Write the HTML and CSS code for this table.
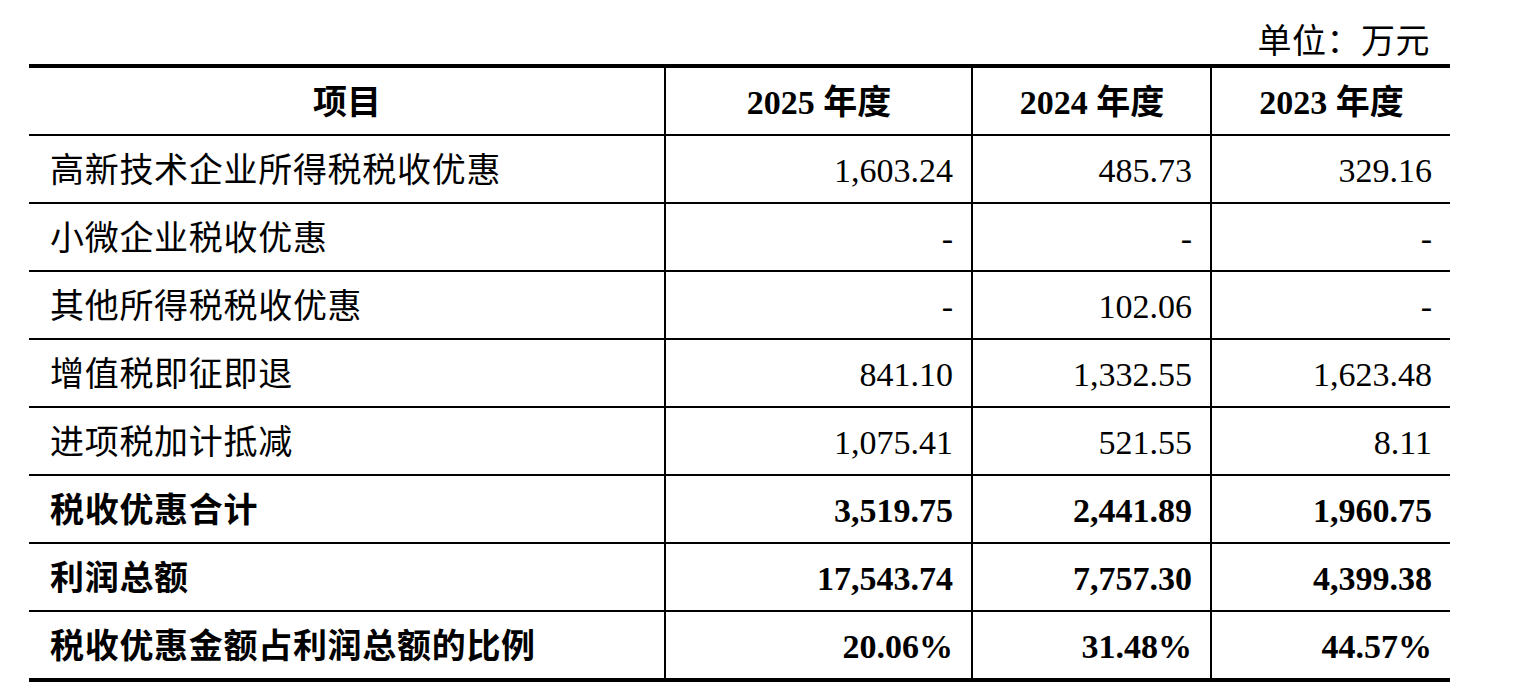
FILE: index.html
```html
<!DOCTYPE html>
<html lang="zh-CN">
<head>
<meta charset="utf-8">
<link rel="stylesheet" href="styles.css">
</head>
<body>
<div class="wrap">
  <div class="unit">单位：万元</div>
  <table class="tbl">
    <colgroup>
      <col class="c1"><col class="c2"><col class="c3"><col class="c4">
    </colgroup>
    <thead>
      <tr>
        <th>项目</th>
        <th>2025 年度</th>
        <th>2024 年度</th>
        <th>2023 年度</th>
      </tr>
    </thead>
    <tbody>
      <tr><td>高新技术企业所得税税收优惠</td><td class="n">1,603.24</td><td class="n">485.73</td><td class="n">329.16</td></tr>
      <tr><td>小微企业税收优惠</td><td class="n">-</td><td class="n">-</td><td class="n">-</td></tr>
      <tr><td>其他所得税税收优惠</td><td class="n">-</td><td class="n">102.06</td><td class="n">-</td></tr>
      <tr><td>增值税即征即退</td><td class="n">841.10</td><td class="n">1,332.55</td><td class="n">1,623.48</td></tr>
      <tr><td>进项税加计抵减</td><td class="n">1,075.41</td><td class="n">521.55</td><td class="n">8.11</td></tr>
      <tr class="b"><td>税收优惠合计</td><td class="n">3,519.75</td><td class="n">2,441.89</td><td class="n">1,960.75</td></tr>
      <tr class="b"><td>利润总额</td><td class="n">17,543.74</td><td class="n">7,757.30</td><td class="n">4,399.38</td></tr>
      <tr class="b"><td>税收优惠金额占利润总额的比例</td><td class="n">20.06%</td><td class="n">31.48%</td><td class="n">44.57%</td></tr>
    </tbody>
  </table>
</div>
</body>
</html>
```
FILE: styles.css
```css
html, body {
  margin: 0;
  padding: 0;
  background: #fff;
}
body {
  font-family: "Liberation Serif", "Noto Sans CJK SC", serif;
  color: #000;
}
.wrap {
  width: 1421px;
  padding-left: 29px;
}
.unit {
  font-size: 34px;
  line-height: 40px;
  padding-top: 22px;
  height: 42px;
  text-align: right;
  padding-right: 20px;
  letter-spacing: 0.5px;
}
.tbl {
  width: 1421px;
  border-collapse: collapse;
  table-layout: fixed;
  border-top: 4px solid #000;
  border-bottom: 4px solid #000;
  font-size: 34px;
}
.c1 { width: 636px; }
.c2 { width: 307px; }
.c3 { width: 239px; }
.c4 { width: 239px; }
.tbl th, .tbl td {
  height: 62px;
  padding: 4px 20px 0 21px;
  border-bottom: 2px solid #000;
  line-height: 40px;
  white-space: nowrap;
}
.tbl th + th, .tbl td + td {
  border-left: 2px solid #000;
}
.tbl th {
  text-align: center;
  font-weight: bold;
}
.tbl td {
  text-align: left;
  font-weight: normal;
}
.tbl td:first-child {
  letter-spacing: 0.7px;
}
.tbl td.n {
  text-align: right;
  padding-right: 18px;
}
.tbl tr.b td {
  font-weight: bold;
}
```
